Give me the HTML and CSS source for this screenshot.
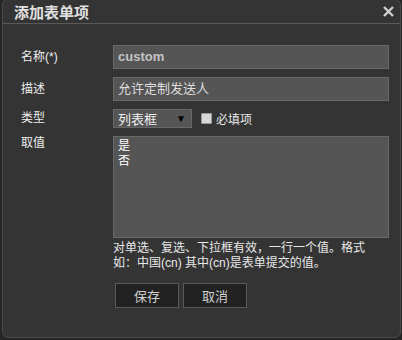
FILE: index.html
```html
<!DOCTYPE html>
<html>
  <head>
    <meta charset="utf-8" />
    <title>添加表单项</title>
    <link rel="stylesheet" href="styles.css">
  </head>
  <body>
    <div class="dialog">
      <div class="dialog-title">
        <span>添加表单项</span>
        <svg class="close" width="11" height="11" viewBox="0 0 11 11">
          <path d="M1 1 L10 10 M10 1 L1 10" stroke="#d0d0d0" stroke-width="2.4" />
        </svg>
      </div>

      <div class="dialog-body">
        <div class="form">
          <label class="label">名称(*)</label>
          <div class="field"><div class="input input-name">custom</div></div>

          <label class="label">描述</label>
          <div class="field"><div class="input">允许定制发送人</div></div>

          <label class="label">类型</label>
          <div class="field type-row">
            <div class="select">
              <span>列表框</span>
              <span class="arrow">▼</span>
            </div>
            <span class="checkbox"></span>
            <span class="check-text">必填项</span>
          </div>

          <label class="label label-top">取值</label>
          <div class="field">
            <div class="textarea">是<br />否</div>
            <p class="hint">对单选、复选、下拉框有效，一行一个值。格式如：中国(cn) 其中(cn)是表单提交的值。</p>
            <div class="buttons">
              <button class="btn">保存</button>
              <button class="btn">取消</button>
            </div>
          </div>
        </div>
      </div>
    </div>
  </body>
</html>
```

FILE: styles.css
```css
html,
body {
  margin: 0;
  padding: 0;
  height: 100%;
}

body {
  background: #262626;
  font-family: "Liberation Sans", "Noto Sans CJK SC", sans-serif;
  font-size: 12px;
  color: #e8e8e8;
  overflow: hidden;
}

.dialog {
  box-sizing: border-box;
  margin: -1px 1px 0 2px;
  height: 339px;
  background: #343434;
  border: 1px solid #4a4a4a;
  border-radius: 6px;
}

.dialog-title {
  display: flex;
  justify-content: space-between;
  align-items: center;
  height: 23px;
  padding: 0 6px 0 11px;
  border-bottom: 1px solid #5a5a5a;
  font-family: "Noto Sans CJK SC", sans-serif;
  font-size: 15px;
  font-weight: bold;
  color: #e0e0e0;
}

.close {
  display: block;
}

.dialog-body {
  padding: 21px 0 0 18px;
}

.form {
  display: grid;
  grid-template-columns: 92px 276px;
  row-gap: 8px;
  align-items: center;
}

.label {
  color: #eeeeee;
  font-size: 12px;
  line-height: 15px;
}

.label-top {
  align-self: start;
}

.input {
  box-sizing: border-box;
  height: 24px;
  line-height: 22px;
  padding: 0 4px;
  background: #555555;
  border: 1px solid #686868;
  font-size: 13px;
  color: #dddddd;
}

.input-name {
  color: #c4c4c4;
  font-weight: bold;
  font-size: 13px;
}

.type-row {
  display: flex;
  align-items: center;
}

.select {
  box-sizing: border-box;
  display: flex;
  justify-content: space-between;
  align-items: center;
  width: 79px;
  height: 19px;
  padding: 0 5px 0 4px;
  background: #555555;
  border: 1px solid #686868;
  font-size: 13px;
  color: #eeeeee;
}

.arrow {
  font-size: 10px;
  color: #000;
}

.checkbox {
  box-sizing: border-box;
  width: 11px;
  height: 11px;
  margin: 0 4px 0 9px;
  background: #d8d8d8;
  border: 1px solid #9a9a9a;
  border-radius: 1px;
}

.check-text {
  font-size: 12px;
  color: #e8e8e8;
}

.textarea {
  box-sizing: border-box;
  height: 102px;
  padding: 2px 4px;
  background: #555555;
  border: 1px solid #686868;
  font-size: 12px;
  line-height: 15px;
  color: #ffffff;
}

.hint {
  margin: 3px 0 0;
  width: 256px;
  font-size: 12px;
  line-height: 15px;
  color: #e8e8e8;
}

.buttons {
  display: flex;
  gap: 4px;
  margin: 12px 0 0 2px;
}

.btn {
  width: 64px;
  height: 25px;
  padding: 0;
  background: #222222;
  border: 1px solid #595959;
  font-family: "Liberation Sans", "Noto Sans CJK SC", sans-serif;
  font-size: 13px;
  color: #d0d0d0;
}
```
